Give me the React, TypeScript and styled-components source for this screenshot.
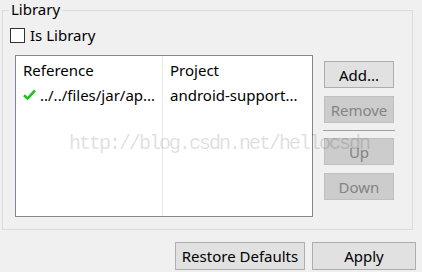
import React from 'react';
import styled, { createGlobalStyle } from 'styled-components';

const GlobalStyle = createGlobalStyle`
  html, body {
    margin: 0;
    padding: 0;
    background: #f0f0f0;
  }
  body {
    font-family: "Noto Sans", "Open Sans", sans-serif;
    font-size: 15px;
    color: #000;
  }
`;

const Page = styled.div`
  position: relative;
  width: 422px;
  height: 272px;
  padding: 10px 0 0 2px;
  box-sizing: border-box;
  overflow: hidden;
`;

const Group = styled.div`
  position: relative;
  width: 411px;
  height: 220px;
  box-sizing: border-box;
  border: 1px solid #dcdcdc;
  padding-top: 16px;
`;

const Legend = styled.span`
  position: absolute;
  top: -11px;
  left: 6px;
  padding: 0 2px;
  line-height: 18px;
  background: #f0f0f0;
`;

const CheckRow = styled.label`
  display: flex;
  align-items: center;
  gap: 5px;
  height: 16px;
  margin-left: 7px;
  line-height: 16px;
`;

const CheckBox = styled.span`
  width: 15px;
  height: 15px;
  box-sizing: border-box;
  border: 1px solid #333;
  background: #fff;
`;

const Body = styled.div`
  display: flex;
  gap: 11px;
  margin-top: 12px;
  padding-left: 12px;
`;

const Table = styled.div`
  display: grid;
  grid-template-columns: 147px 1fr;
  width: 298px;
  height: 162px;
  box-sizing: border-box;
  border: 1px solid #828790;
  background: #fff;
`;

const Column = styled.div<{ $divider?: boolean }>`
  padding-top: 1px;
  border-right: ${(p) => (p.$divider ? '1px solid #e8e8e8' : 'none')};
  overflow: hidden;
`;

const Cell = styled.div`
  display: flex;
  align-items: center;
  gap: 4px;
  height: 25px;
  padding-left: 7px;
  white-space: nowrap;
`;

const ButtonColumn = styled.div`
  display: flex;
  flex-direction: column;
  gap: 8px;
  margin-top: 6px;
`;

const Button = styled.button<{ $width?: number; $height?: number }>`
  width: ${(p) => p.$width ?? 70}px;
  height: ${(p) => p.$height ?? 27}px;
  padding: 0;
  box-sizing: border-box;
  border: 1px solid #adadad;
  background: #e1e1e1;
  color: #000;
  font: inherit;

  &:disabled {
    border-color: #bfbfbf;
    background: #cccccc;
    color: #838383;
  }
`;

const Separator = styled.div`
  width: 72px;
  height: 1px;
  margin: -1px 0 -1px -1px;
  background: #a0a0a0;
`;

const Footer = styled.div`
  display: flex;
  justify-content: flex-end;
  gap: 7px;
  margin-top: 12px;
  padding-right: 6px;
`;

const Watermark = styled.div`
  position: absolute;
  left: 69px;
  top: 132px;
  font-family: "Liberation Mono", monospace;
  font-size: 20px;
  letter-spacing: -2px;
  color: rgba(0, 0, 0, 0.14);
  pointer-events: none;
  white-space: nowrap;
`;

const CheckMark = () => (
  <svg width="13" height="11" viewBox="0 0 13 11">
    <path d="M1 6.2 L4.6 9.6 L12 1.4" fill="none" stroke="#1ec41e" strokeWidth="2.6" strokeLinejoin="round" />
  </svg>
);

export default function App() {
  return (
    <Page>
      <GlobalStyle />
      <Group>
        <Legend>Library</Legend>
        <CheckRow>
          <CheckBox />
          Is Library
        </CheckRow>
        <Body>
          <Table>
            <Column $divider>
              <Cell>Reference</Cell>
              <Cell>
                <CheckMark />
                ../../files/jar/ap...
              </Cell>
            </Column>
            <Column>
              <Cell>Project</Cell>
              <Cell>android-support...</Cell>
            </Column>
          </Table>
          <ButtonColumn>
            <Button>Add...</Button>
            <Button disabled>Remove</Button>
            <Separator />
            <Button disabled>Up</Button>
            <Button disabled>Down</Button>
          </ButtonColumn>
        </Body>
      </Group>
      <Footer>
        <Button $width={130} $height={28}>Restore Defaults</Button>
        <Button $width={104} $height={28}>Apply</Button>
      </Footer>
      <Watermark>http://blog.csdn.net/hellocsdn</Watermark>
    </Page>
  );
}
